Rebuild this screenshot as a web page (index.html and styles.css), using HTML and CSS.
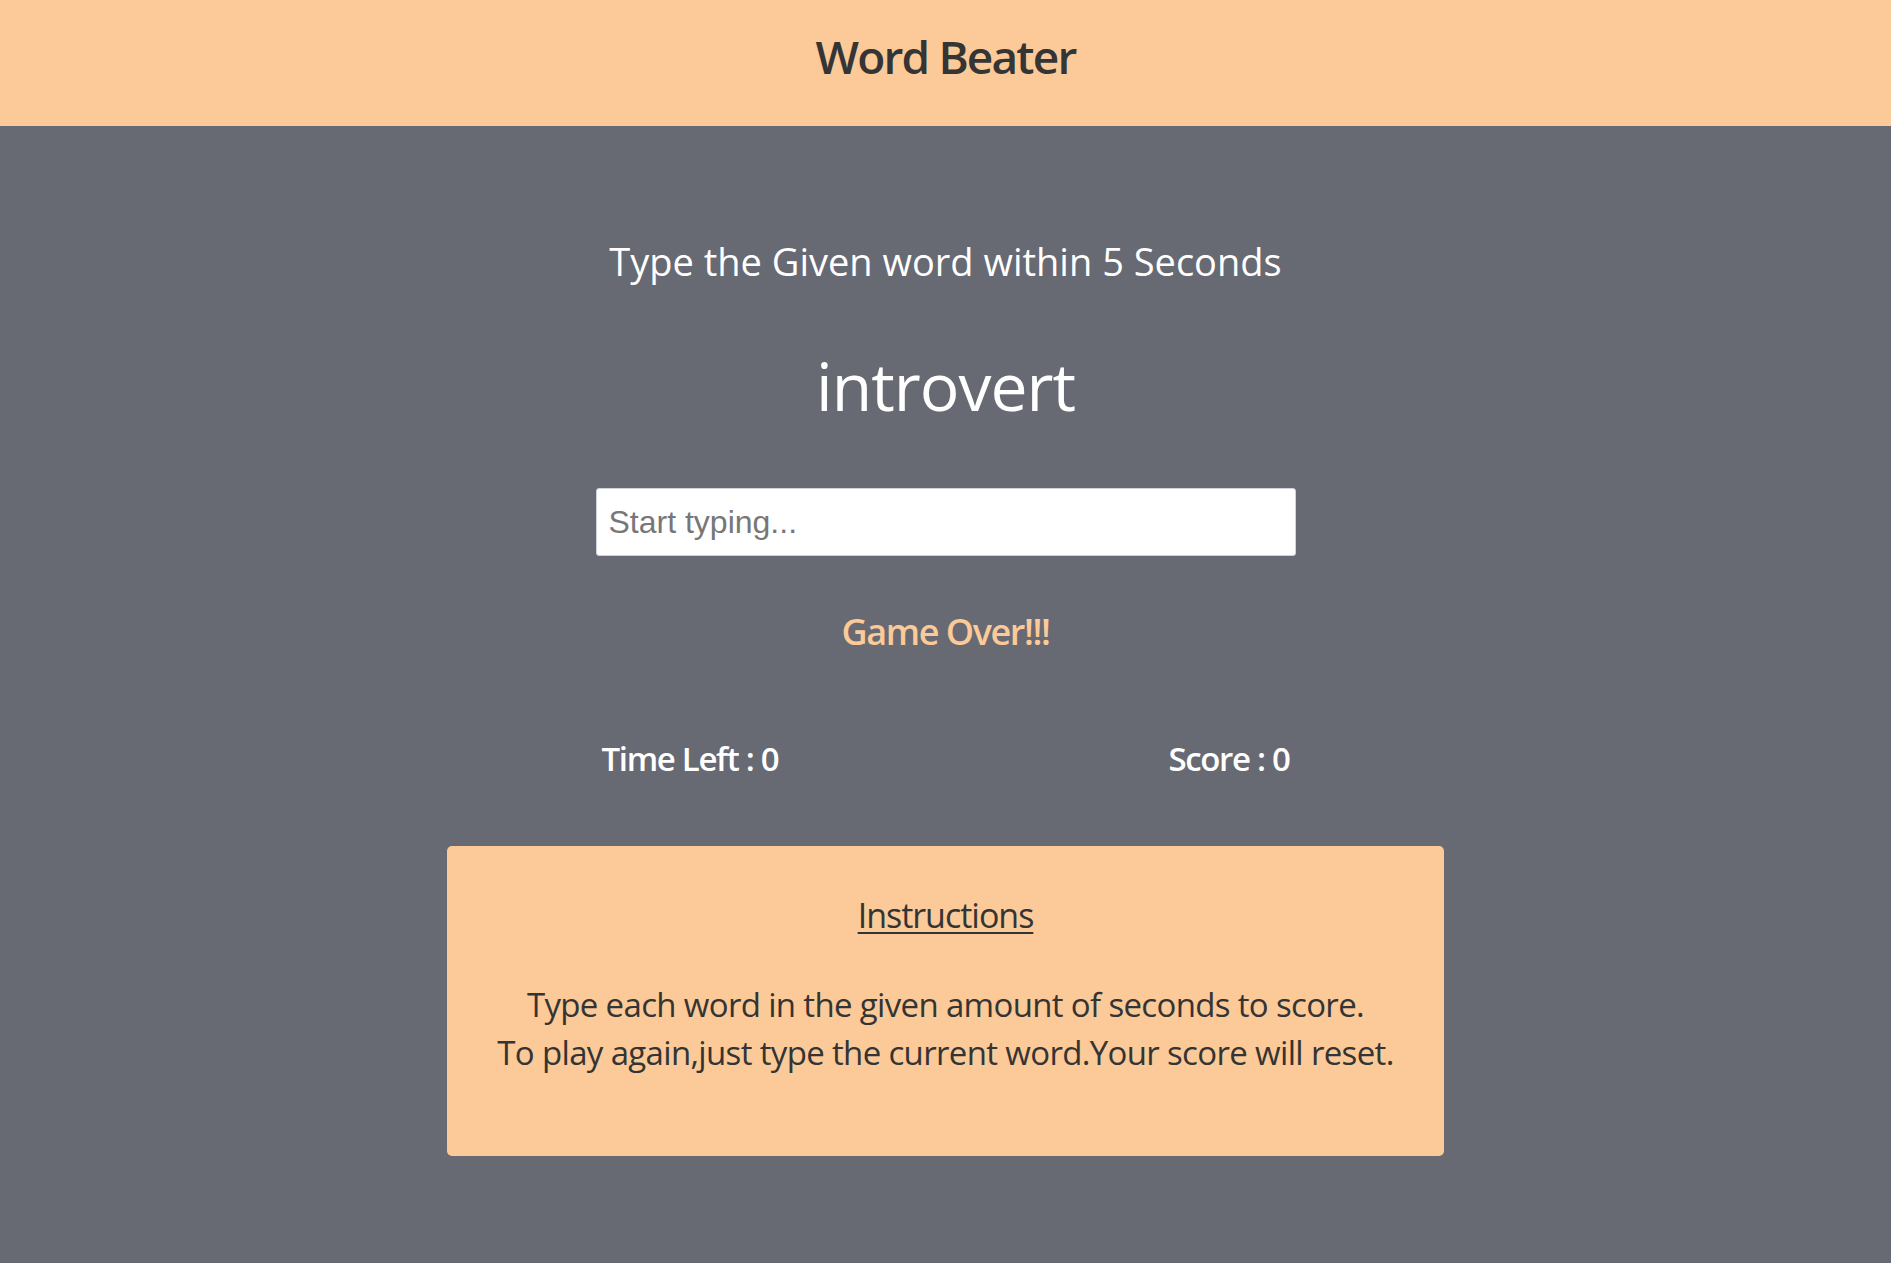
FILE: index.html
```html
<!DOCTYPE html>
<html lang="en">
<head>
<meta charset="utf-8">
<title>Word Beater</title>
<link rel="stylesheet" href="styles.css">
</head>
<body>
<header class="topbar">
  <h1 class="brand">Word Beater</h1>
</header>
<main class="game">
  <p class="lead">Type the Given word within <span class="seconds">5</span> Seconds</p>
  <h2 class="current-word">introvert</h2>
  <input class="word-input" type="text" placeholder="Start typing..." autofocus>
  <h4 class="message">Game Over!!!</h4>
  <div class="stats">
    <h3 class="stat">Time Left : <span>0</span></h3>
    <h3 class="stat">Score : <span>0</span></h3>
  </div>
</main>
<section class="card">
  <h5 class="card-title">Instructions</h5>
  <p class="card-text">Type each word in the given amount of seconds to score.<br>To play again,just type the current word.Your score will reset.</p>
</section>
</body>
</html>
```

FILE: styles.css
```css
html, body {
  margin: 0;
  padding: 0;
}
body {
  background: #676973;
  font-family: "Open Sans", "Noto Sans", sans-serif;
  color: #fff;
  min-height: 1263px;
}
.topbar {
  background: #fbca98;
  padding: 26px 0 40px;
  text-align: center;
}
.brand {
  margin: 0;
  font-size: 46px;
  line-height: 60px;
  font-weight: 600;
  color: #353535;
  letter-spacing: -0.04em;
}
.game {
  width: 700px;
  margin: 0 auto;
  text-align: center;
  padding-top: 111px;
}
.lead {
  margin: 0;
  font-size: 38px;
  line-height: 48px;
  letter-spacing: 0;
}
.current-word {
  margin: 55px 0 0;
  font-size: 66px;
  line-height: 90px;
  font-weight: 400;
  letter-spacing: -0.015em;
}
.word-input {
  display: block;
  box-sizing: border-box;
  width: 700px;
  height: 68px;
  margin: 58px 0 0;
  padding: 0 12px;
  border: 1px solid #ced4da;
  border-radius: 3px;
  background: #fff;
  font-family: "Liberation Sans", Arial, sans-serif;
  font-size: 32px;
  color: #495057;
  outline: none;
}
.word-input::placeholder {
  color: #777;
  opacity: 1;
}
.message {
  margin: 52px 0 0;
  font-size: 36px;
  line-height: 48px;
  font-weight: 600;
  color: #fbca98;
  letter-spacing: -0.04em;
}
.stats {
  display: flex;
  justify-content: space-between;
  padding: 0 6px;
  margin-top: 80px;
}
.stat {
  margin: 0;
  font-size: 33px;
  line-height: 46px;
  font-weight: 600;
  letter-spacing: -0.04em;
}
.card {
  box-sizing: border-box;
  width: 997px;
  margin: 64px auto 0;
  padding: 46px 20px 79px;
  background: #fbca98;
  border-radius: 5px;
  text-align: center;
  color: #343434;
}
.card-title {
  margin: 0;
  font-size: 34px;
  line-height: 46px;
  font-weight: 500;
  text-decoration: underline;
  text-underline-offset: 4px;
  text-decoration-thickness: 2px;
  letter-spacing: -0.03em;
}
.card-text {
  margin: 43px 0 0;
  font-size: 33px;
  line-height: 48px;
  letter-spacing: -0.02em;
}
```
